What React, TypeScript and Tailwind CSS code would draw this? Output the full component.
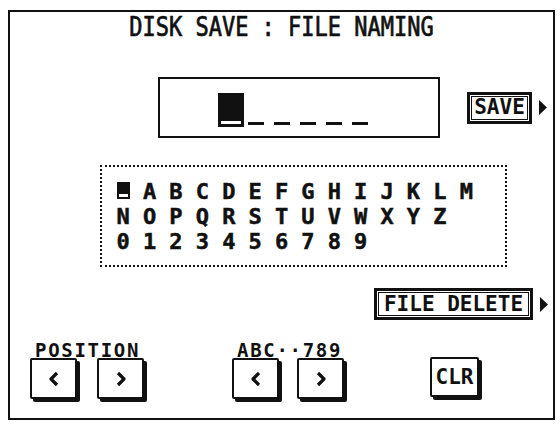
import React from "react";

const FONT = "font-['DejaVu_Sans_Mono','Liberation_Mono',monospace]";

const rows: string[][] = [
  ["_CURSOR_", ..."ABCDEFGHIJKLM".split("")],
  "NOPQRSTUVWXYZ".split(""),
  "0123456789".split(""),
];

function Arrow() {
  return (
    <svg width="10" height="17" viewBox="0 0 10 17" className="shrink-0">
      <polygon points="1,1 9,8.5 1,16" fill="#111" />
    </svg>
  );
}

function Chevron({ dir }: { dir: "left" | "right" }) {
  return (
    <svg width="10" height="16" viewBox="0 0 10 16">
      <polyline
        points={dir === "left" ? "8,2 2,8 8,14" : "2,2 8,8 2,14"}
        fill="none"
        stroke="#111"
        strokeWidth="3.2"
        strokeLinejoin="round"
      />
    </svg>
  );
}

function KeyButton({ children, wide = false }: { children: React.ReactNode; wide?: boolean }) {
  return (
    <div
      className={`flex items-center justify-center border-2 border-[#111] bg-white rounded-[2px] shadow-[3px_3px_0_#111] ${
        wide ? "w-[49px] h-[40px]" : "w-[47px] h-[41px]"
      }`}
    >
      {children}
    </div>
  );
}

function PanelButton({ label, w }: { label: string; w: string }) {
  return (
    <div className={`${w} h-[32px] border-[3px] border-[#111] p-[1px] bg-white`}>
      <div className="h-full border border-[#111] flex items-center justify-center">
        <span className="text-[21px] leading-none font-bold text-[#111]">{label}</span>
      </div>
    </div>
  );
}

export default function App() {
  return (
    <div className={`w-[560px] h-[426px] bg-white overflow-hidden ${FONT}`}>
      <div className="ml-[8px] mt-[10px] w-[547px] h-[410px] border-2 border-[#111] flex flex-col">
        {/* Title */}
        <div className="mt-[5px] h-[22px] flex justify-center">
          <span className="inline-block text-[22px] leading-[22px] text-[#111] scale-y-[1.18] [-webkit-text-stroke:0.6px_#111]">
            DISK SAVE : FILE NAMING
          </span>
        </div>

        {/* Name field + SAVE */}
        <div className="mt-[38px] flex items-center">
          <div className="ml-[148px] w-[282px] h-[61px] border-2 border-[#111] pl-[58px] pt-[14px]">
            <div className="flex items-end">
              <div className="relative w-[26px] h-[34px] bg-[#111]">
                <div className="absolute left-[3px] right-[3px] bottom-[3px] h-[3px] bg-white" />
              </div>
              <div className="flex gap-[10px] ml-[4px] mb-[2px]">
                {[0, 1, 2, 3, 4].map((i) => (
                  <div key={i} className="w-[16px] h-[3px] bg-[#111]" />
                ))}
              </div>
            </div>
          </div>
          <div className="ml-[27px]">
            <PanelButton label="SAVE" w="w-[65px]" />
          </div>
          <div className="ml-[6px]">
            <Arrow />
          </div>
        </div>

        {/* Character table */}
        <div className="mt-[27px] ml-[90px] w-[407px] h-[102px] border-2 border-dotted border-[#111] pl-[8px] pt-[12px]">
          {rows.map((row, r) => (
            <div key={r} className="grid grid-cols-[repeat(14,26.4px)] h-[25px]">
              {row.map((ch, c) => (
                <div key={c} className="flex justify-center">
                  {ch === "_CURSOR_" ? (
                    <div className="relative mt-[3px] w-[13px] h-[17px] bg-[#111]">
                      <div className="absolute left-[2px] right-[2px] bottom-[2px] h-[3px] bg-white" />
                    </div>
                  ) : (
                    <span className="text-[22px] leading-[25px] font-bold text-[#111] [-webkit-text-stroke:0.5px_#111]">
                      {ch}
                    </span>
                  )}
                </div>
              ))}
            </div>
          ))}
        </div>

        {/* FILE DELETE */}
        <div className="mt-[21px] flex items-center justify-end pr-[4px]">
          <PanelButton label="FILE DELETE" w="w-[159px]" />
          <div className="ml-[6px]">
            <Arrow />
          </div>
        </div>

        {/* Bottom controls */}
        <div className="mt-[22px] flex pl-[20px]">
          <div className="flex flex-col">
            <span className="pl-[5px] text-[19px] leading-[16px] font-bold tracking-[1.7px] text-[#111]">
              POSITION
            </span>
            <div className="flex gap-[20px]">
              <KeyButton>
                <Chevron dir="left" />
              </KeyButton>
              <KeyButton>
                <Chevron dir="right" />
              </KeyButton>
            </div>
          </div>

          <div className="ml-[88px] flex flex-col">
            <span className="pl-[5px] text-[19px] leading-[16px] font-bold tracking-[1.7px] text-[#111]">
              ABC··789
            </span>
            <div className="flex gap-[18px]">
              <KeyButton>
                <Chevron dir="left" />
              </KeyButton>
              <KeyButton>
                <Chevron dir="right" />
              </KeyButton>
            </div>
          </div>

          <div className="ml-[86px] mt-[15px]">
            <KeyButton wide>
              <span className="text-[21px] leading-none font-bold text-[#111]">CLR</span>
            </KeyButton>
          </div>
        </div>
      </div>
    </div>
  );
}
